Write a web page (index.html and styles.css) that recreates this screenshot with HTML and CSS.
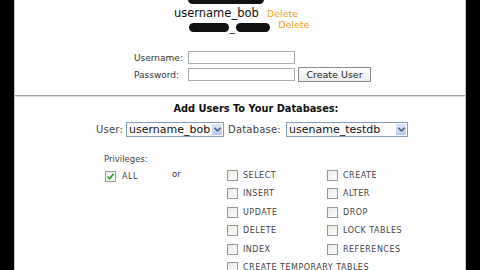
FILE: index.html
```html
<!DOCTYPE html>
<html lang="en">
<head>
    <meta charset="UTF-8">
    <title>MySQL Users</title>
    <link rel="stylesheet" href="styles.css">
</head>
<body>
    <div class="page">
        <div class="user-list">
            <div class="user-row first"><span class="blot" style="width: 76px"></span><a class="del raised">Delete</a></div>
            <div class="user-row shift-l"><span class="uname">username_bob</span> <a class="del">Delete</a></div>
            <div class="user-row shift-r"><span class="blot" style="width: 40px"></span><span class="under">_</span><span class="blot" style="width: 34px"></span> <a class="del raised">Delete</a></div>
        </div>

        <form class="new-user">
            <label>Username:</label>
            <input type="text" class="field">
            <span></span>
            <label>Password:</label>
            <input type="password" class="field">
            <button type="button" class="btn">Create User</button>
        </form>

        <hr class="divider">

        <div class="assign">
            <h2>Add Users To Your Databases:</h2>

            <div class="pick-row">
                <span class="lbl big user-lbl">User:</span>
                <div class="select user-sel"><span>username_bob</span><span class="arrow"><svg width="7" height="5" viewBox="0 0 7 5"><path d="M0.5 0.8 L3.5 3.8 L6.5 0.8" fill="none" stroke="#4d6185" stroke-width="1.6"/></svg></span></div>
                <span class="lbl big db-lbl">Database:</span>
                <div class="select db-sel"><span>usename_testdb</span><span class="arrow"><svg width="7" height="5" viewBox="0 0 7 5"><path d="M0.5 0.8 L3.5 3.8 L6.5 0.8" fill="none" stroke="#4d6185" stroke-width="1.6"/></svg></span></div>
            </div>

            <div class="lbl priv-title">Privileges:</div>

            <div class="privs">
                <div class="all">
                    <span class="box checked"><svg width="9" height="9" viewBox="0 0 9 9"><path d="M1.5 4.5 L3.6 6.7 L7.6 1.8" fill="none" stroke="#21a121" stroke-width="1.6"/></svg></span>
                    <span class="opt">ALL</span>
                </div>
                <div class="or">or</div>
                <div class="opts">
                    <div class="opt-item"><span class="box"></span><span class="opt">SELECT</span></div>
                    <div class="opt-item"><span class="box"></span><span class="opt">CREATE</span></div>
                    <div class="opt-item"><span class="box"></span><span class="opt">INSERT</span></div>
                    <div class="opt-item"><span class="box"></span><span class="opt">ALTER</span></div>
                    <div class="opt-item"><span class="box"></span><span class="opt">UPDATE</span></div>
                    <div class="opt-item"><span class="box"></span><span class="opt">DROP</span></div>
                    <div class="opt-item"><span class="box"></span><span class="opt">DELETE</span></div>
                    <div class="opt-item"><span class="box"></span><span class="opt">LOCK TABLES</span></div>
                    <div class="opt-item"><span class="box"></span><span class="opt">INDEX</span></div>
                    <div class="opt-item"><span class="box"></span><span class="opt">REFERENCES</span></div>
                    <div class="opt-item wide"><span class="box"></span><span class="opt">CREATE TEMPORARY TABLES</span></div>
                </div>
            </div>
        </div>
    </div>
</body>
</html>
```

FILE: styles.css
```css
html, body {
    margin: 0;
    height: 100%;
    overflow: hidden;
}

body {
    background-color: #000;
    font-family: "DejaVu Sans", Verdana, sans-serif;
    color: #333;
}

.page {
    width: 450px;
    height: 270px;
    margin-left: 14px;
    background: #fff;
    border-left: 1px solid #c8c8c8;
    border-right: 1px solid #c8c8c8;
    overflow: hidden;
}

/* existing users */
.user-list {
    margin-top: -9px;
}

.user-row {
    height: 14px;
    line-height: 14px;
    text-align: center;
    white-space: nowrap;
}

.first {
    padding-left: 6px;
}

.shift-l {
    padding-right: 8px;
}

.shift-r {
    padding-left: 18px;
}

.blot {
    display: inline-block;
    height: 9px;
    background: #111;
    border-radius: 5px;
    vertical-align: -1px;
}

.under {
    font-size: 11px;
    color: #222;
    margin: 0 1px;
}

.uname {
    font-size: 11.5px;
    color: #111;
}

.del {
    font-size: 9.5px;
    color: #f4a226;
    margin-left: 3px;
}

.raised {
    position: relative;
    top: -3px;
}

/* create user */
.new-user {
    display: grid;
    grid-template-columns: 51px 107px auto;
    column-gap: 3px;
    row-gap: 3px;
    align-items: center;
    margin: 18px 0 0 119px;
    width: 240px;
}

.new-user label {
    font-size: 9px;
    color: #333;
}

.field {
    box-sizing: border-box;
    height: 13px;
    width: 107px;
    margin: 0;
    padding: 0;
    border: 1px solid #a5acb2;
    background: #fff;
}

.btn {
    box-sizing: border-box;
    height: 15px;
    width: 73px;
    margin: 0;
    padding: 0;
    font-family: "DejaVu Sans", Verdana, sans-serif;
    font-size: 9.5px;
    color: #222;
    border: 1px solid #8a8a8a;
    background: linear-gradient(#fff, #ececec);
}

.divider {
    margin: 13px 0 0 0;
    height: 0;
    border: 0;
    border-top: 1px solid #a0a0a0;
    border-bottom: 1px solid #dcdcdc;
}

/* assign users */
.assign {
    padding-left: 32px;
}

.assign h2 {
    margin: 6px 0 0 0;
    font-size: 9.8px;
    line-height: 12px;
    text-align: center;
    color: #111;
}

.pick-row {
    display: flex;
    align-items: center;
    margin: 7px 0 0 49px;
}

.lbl {
    font-size: 8.5px;
    color: #444;
}

.lbl.big {
    font-size: 10px;
    letter-spacing: 0.2px;
}

.user-lbl {
    width: 30px;
}

.db-lbl {
    width: 56px;
    margin-left: 4px;
    margin-right: 2px;
}

.select {
    box-sizing: border-box;
    display: flex;
    align-items: center;
    justify-content: space-between;
    height: 15px;
    border: 1px solid #7f9db9;
    background: #fff;
    padding-left: 2px;
    font-size: 11px;
    color: #111;
}

.user-sel {
    width: 98px;
}

.db-sel {
    width: 122px;
}

.arrow {
    display: flex;
    align-items: center;
    justify-content: center;
    width: 12px;
    height: 13px;
    background: linear-gradient(#dde7fb, #b7c9f2);
    border: 1px solid #fff;
    box-sizing: border-box;
}

.priv-title {
    margin: 16px 0 0 57px;
    line-height: 12px;
    font-size: 8.5px;
}

.privs {
    display: flex;
    margin: 1px 0 0 58px;
}

.all {
    width: 67px;
    height: 18.5px;
    display: flex;
    align-items: center;
    gap: 6px;
    padding-top: 3px;
    box-sizing: border-box;
}

.or {
    width: 55px;
    height: 18.5px;
    font-size: 8.5px;
    line-height: 17px;
}

.opts {
    display: grid;
    grid-template-columns: 100px 100px;
    grid-auto-rows: 18.5px;
}

.opt-item {
    display: flex;
    align-items: center;
    gap: 5px;
}

.wide {
    grid-column: span 2;
}

.box {
    box-sizing: border-box;
    width: 11px;
    height: 11px;
    border: 1px solid #8ea08c;
    background: linear-gradient(135deg, #e8ebe4, #fff);
    display: flex;
    align-items: center;
    justify-content: center;
}

.opt {
    font-size: 8px;
    letter-spacing: 0.5px;
    color: #444;
}
```
